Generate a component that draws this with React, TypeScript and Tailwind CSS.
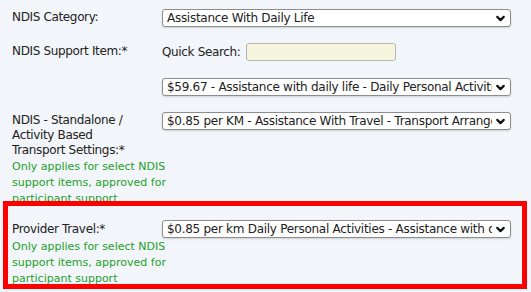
import { ChevronDown } from "lucide-react";

const font = "font-['DejaVu_Sans','Liberation_Sans',sans-serif]";

function Select({ value }: { value: string }) {
  return (
    <div className="relative w-[349px] h-[18px]">
      <select
        defaultValue={value}
        className="appearance-none block w-full h-full bg-white border border-[#8d8d8d] rounded-[3px] pl-[4px] pr-[18px] text-[12px] tracking-[-0.28px] leading-[16px] text-[#222] shadow-[0_1px_2px_rgba(0,0,0,0.15)] outline-none"
      >
        <option>{value}</option>
      </select>
      <ChevronDown
        size={13}
        strokeWidth={4}
        className="absolute right-[4px] top-[3px] text-[#111] pointer-events-none"
      />
    </div>
  );
}

function Note() {
  return (
    <div className="text-[11px] leading-[16px] text-[#24a02b] mt-[1px] whitespace-nowrap">
      Only applies for select NDIS
      <br />
      support items, approved for
      <br />
      participant support
    </div>
  );
}

export default function App() {
  return (
    <div className={`w-[531px] h-[292px] bg-[#f2f5f9] text-[#222] overflow-hidden ${font}`}>
      <div className="pl-[12px] pt-[9px]">
        <div className="grid grid-cols-[150px_349px] items-start">
          <div className="text-[12px] tracking-[-0.35px] leading-[17px]">NDIS Category:</div>
          <Select value="Assistance With Daily Life" />
        </div>

        <div className="grid grid-cols-[150px_349px] items-start mt-[16px]">
          <div className="text-[12px] tracking-[-0.35px] leading-[17px]">NDIS Support Item:*</div>
          <div className="flex flex-col gap-[17px]">
            <div className="flex items-center gap-[6px] text-[12px] tracking-[-0.35px] leading-[18px]">
              <span>Quick Search:</span>
              <input className="w-[150px] h-[18px] bg-[#f5f5dd] border border-[#b5b5b5] rounded-[3px] outline-none" />
            </div>
            <Select value="$59.67 - Assistance with daily life - Daily Personal Activities" />
          </div>
        </div>

        <div className="grid grid-cols-[150px_349px] items-start mt-[16px]">
          <div className="pt-[1px]">
            <div className="text-[12px] tracking-[-0.35px] leading-[15px]">
              NDIS - Standalone /
              <br />
              Activity Based
              <br />
              Transport Settings:*
            </div>
            <Note />
          </div>
          <Select value="$0.85 per KM - Assistance With Travel - Transport Arrangements" />
        </div>
      </div>

      <div className="relative ml-[3px] mt-[-6px] w-[524px] h-[88px] border-[5px] border-[#ff0000] pl-[4px] pt-[14px]">
        <div className="grid grid-cols-[150px_349px] items-start">
          <div>
            <div className="text-[12px] tracking-[-0.35px] leading-[18px]">Provider Travel:*</div>
            <Note />
          </div>
          <Select value="$0.85 per km Daily Personal Activities - Assistance with daily life" />
        </div>
      </div>
    </div>
  );
}
